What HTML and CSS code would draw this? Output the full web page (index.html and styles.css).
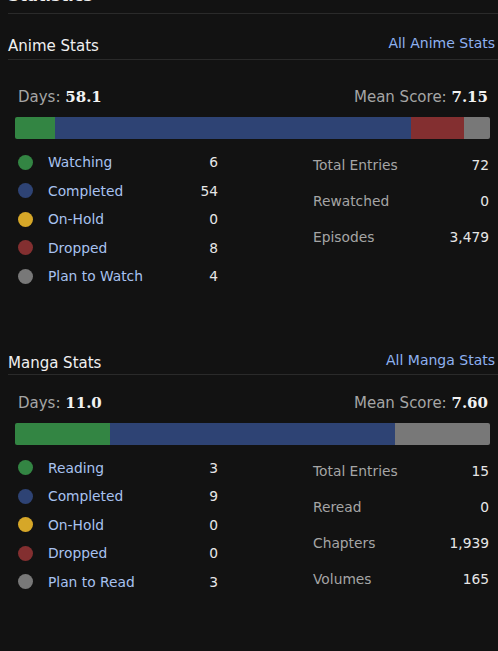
FILE: index.html
```html
<!DOCTYPE html>
<html>
<head>
<meta charset="utf-8">
<link rel="stylesheet" href="styles.css">
</head>
<body>
<div class="page">
  <h2 class="main-title">Statistics</h2>

  <section class="stats stats-anime">
    <div class="stats-head">
      <h3 class="stats-title">Anime Stats</h3>
      <a class="stats-link" href="#">All Anime Stats</a>
    </div>
    <div class="stats-summary">
      <div class="sum-item">Days: <span class="num">58.1</span></div>
      <div class="sum-item">Mean Score: <span class="num">7.15</span></div>
    </div>
    <div class="bar">
      <span class="seg green" style="width:8.333%"></span>
      <span class="seg blue" style="width:75%"></span>
      <span class="seg red" style="width:11.111%"></span>
      <span class="seg grey" style="width:5.556%"></span>
    </div>
    <div class="stats-body">
      <ul class="legend">
        <li><span class="dot green"></span><span class="lbl">Watching</span><span class="val">6</span></li>
        <li><span class="dot blue"></span><span class="lbl">Completed</span><span class="val">54</span></li>
        <li><span class="dot yellow"></span><span class="lbl">On-Hold</span><span class="val">0</span></li>
        <li><span class="dot red"></span><span class="lbl">Dropped</span><span class="val">8</span></li>
        <li><span class="dot grey"></span><span class="lbl">Plan to Watch</span><span class="val">4</span></li>
      </ul>
      <ul class="totals">
        <li><span class="tlbl">Total Entries</span><span class="val">72</span></li>
        <li><span class="tlbl">Rewatched</span><span class="val">0</span></li>
        <li><span class="tlbl">Episodes</span><span class="val">3,479</span></li>
      </ul>
    </div>
  </section>

  <section class="stats stats-manga">
    <div class="stats-head">
      <h3 class="stats-title">Manga Stats</h3>
      <a class="stats-link" href="#">All Manga Stats</a>
    </div>
    <div class="stats-summary">
      <div class="sum-item">Days: <span class="num">11.0</span></div>
      <div class="sum-item">Mean Score: <span class="num">7.60</span></div>
    </div>
    <div class="bar">
      <span class="seg green" style="width:20%"></span>
      <span class="seg blue" style="width:60%"></span>
      <span class="seg grey" style="width:20%"></span>
    </div>
    <div class="stats-body">
      <ul class="legend">
        <li><span class="dot green"></span><span class="lbl">Reading</span><span class="val">3</span></li>
        <li><span class="dot blue"></span><span class="lbl">Completed</span><span class="val">9</span></li>
        <li><span class="dot yellow"></span><span class="lbl">On-Hold</span><span class="val">0</span></li>
        <li><span class="dot red"></span><span class="lbl">Dropped</span><span class="val">0</span></li>
        <li><span class="dot grey"></span><span class="lbl">Plan to Read</span><span class="val">3</span></li>
      </ul>
      <ul class="totals">
        <li><span class="tlbl">Total Entries</span><span class="val">15</span></li>
        <li><span class="tlbl">Reread</span><span class="val">0</span></li>
        <li><span class="tlbl">Chapters</span><span class="val">1,939</span></li>
        <li><span class="tlbl">Volumes</span><span class="val">165</span></li>
      </ul>
    </div>
  </section>
</div>
</body>
</html>
```
FILE: styles.css
```css
html, body {
  margin: 0;
  padding: 0;
  background: #121212;
}
body {
  font-family: "DejaVu Sans", Verdana, sans-serif;
  font-size: 13.8px;
  color: #e0e0e0;
  overflow: hidden;
}
.page {
  padding-left: 8px;
  margin-top: -14px;
}
.main-title {
  margin: 0;
  font-size: 16px;
  font-weight: bold;
  color: #f0f0f0;
  line-height: 20px;
  padding-bottom: 7px;
  border-bottom: 1px solid #2a2a2a;
}
.stats-anime {
  margin-top: 22px;
}
.stats-manga {
  margin-top: 62px;
}
.stats-head {
  display: flex;
  justify-content: space-between;
  align-items: flex-start;
  border-bottom: 1px solid #2a2a2a;
  padding-bottom: 3px;
}
.stats-manga .stats-head {
  padding-bottom: 1px;
}
.stats-title {
  margin: 0;
  font-size: 15px;
  font-weight: normal;
  color: #f0f0f0;
  line-height: 20px;
}
.stats-link {
  color: #8eb1f0;
  text-decoration: none;
  font-size: 14px;
  line-height: 20px;
  margin-top: -3px;
  margin-right: 3px;
}
.stats-summary {
  display: flex;
  justify-content: space-between;
  padding: 27px 10px 0 10px;
  font-size: 15px;
  line-height: 20px;
  color: #a5a5a5;
}
.stats-manga .stats-summary {
  padding-top: 18px;
}
.num {
  font-family: "DejaVu Serif", Georgia, serif;
  font-weight: bold;
  color: #f2f2f2;
  font-size: 15px;
}
.bar {
  display: flex;
  height: 22px;
  margin: 10px 8px 0 7px;
  border-radius: 2px;
  overflow: hidden;
}
.seg { display: block; height: 100%; }
.green { background: #338543; }
.blue { background: #2e4374; }
.red { background: #832f30; }
.grey { background: #787878; }
.yellow { background: #d6a728; }

.stats-body {
  display: flex;
  justify-content: space-between;
  align-items: flex-start;
  padding: 8px 9px 0 10px;
}
ul { list-style: none; margin: 0; padding: 0; }
.legend { width: 200px; padding-top: 1px; }
.legend li {
  display: flex;
  align-items: center;
  height: 28.5px;
}
.dot {
  width: 15px;
  height: 15px;
  border-radius: 50%;
  flex: none;
}
.lbl {
  color: #a8c2f0;
  margin-left: 15px;
  flex: 1;
}
.val {
  color: #e6e6e6;
  text-align: right;
}
.totals { width: 176px; }
.totals li {
  display: flex;
  justify-content: space-between;
  align-items: center;
  height: 36px;
}
.tlbl { color: #a5a5a5; }
```
